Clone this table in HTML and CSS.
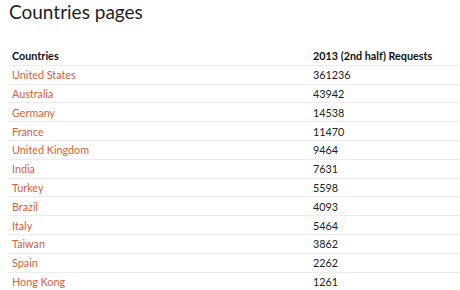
FILE: index.html
```html
<!DOCTYPE html>
<html>
<head>
<meta charset="utf-8">
<link rel="stylesheet" href="styles.css">
</head>
<body>
<div class="page">
  <h1 class="title">Countries pages</h1>
  <table class="stats">
    <thead>
      <tr><th class="c1">Countries</th><th class="c2">2013 (2nd half) Requests</th></tr>
    </thead>
    <tbody>
      <tr><td class="c1"><a href="#">United States</a></td><td class="c2">361236</td></tr>
      <tr><td class="c1"><a href="#">Australia</a></td><td class="c2">43942</td></tr>
      <tr><td class="c1"><a href="#">Germany</a></td><td class="c2">14538</td></tr>
      <tr><td class="c1"><a href="#">France</a></td><td class="c2">11470</td></tr>
      <tr><td class="c1"><a href="#">United Kingdom</a></td><td class="c2">9464</td></tr>
      <tr><td class="c1"><a href="#">India</a></td><td class="c2">7631</td></tr>
      <tr><td class="c1"><a href="#">Turkey</a></td><td class="c2">5598</td></tr>
      <tr><td class="c1"><a href="#">Brazil</a></td><td class="c2">4093</td></tr>
      <tr><td class="c1"><a href="#">Italy</a></td><td class="c2">5464</td></tr>
      <tr><td class="c1"><a href="#">Taiwan</a></td><td class="c2">3862</td></tr>
      <tr><td class="c1"><a href="#">Spain</a></td><td class="c2">2262</td></tr>
      <tr><td class="c1"><a href="#">Hong Kong</a></td><td class="c2">1261</td></tr>
    </tbody>
  </table>
</div>
</body>
</html>
```
FILE: styles.css
```css
html, body {
  margin: 0;
  padding: 0;
  background: #ffffff;
}
.page {
  padding: 0 0 0 8px;
  font-family: "Lato", "Liberation Sans", sans-serif;
  color: #222222;
}
.title {
  margin: 0;
  padding: 0 0 0 1px;
  font-size: 19px;
  font-weight: 400;
  line-height: 24px;
  height: 47px;
  color: #1f1f1f;
}
.stats {
  width: 452px;
  border-collapse: collapse;
  font-size: 10.8px;
}
.stats th,
.stats td {
  text-align: left;
  padding: 0 4px;
  height: 17.8px;
  line-height: 17px;
  border-bottom: 1px solid #ececec;
}
.stats th {
  font-weight: 700;
  color: #111111;
}
.stats th.c1, .stats td.c1 {
  width: 293px;
}
.stats a {
  color: #d9603b;
  text-decoration: none;
}
.stats tbody tr:last-child td {
  border-bottom: none;
}
```
